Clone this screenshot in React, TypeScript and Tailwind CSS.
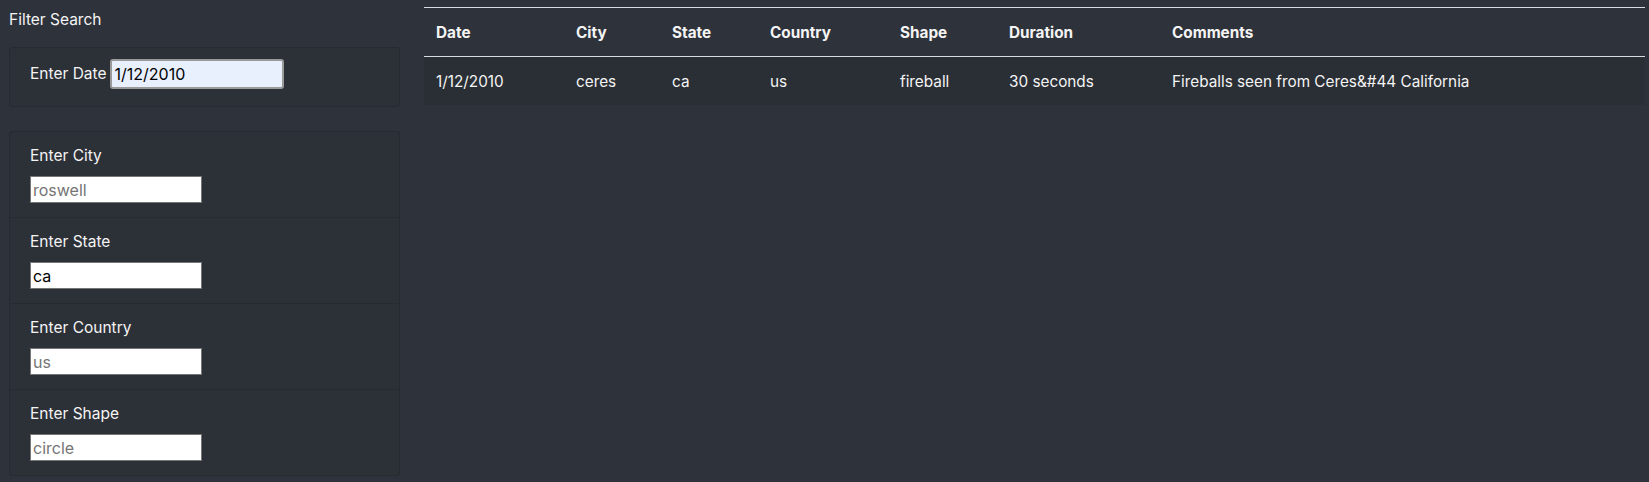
import React from 'react';

const font = { fontFamily: 'Inter, "Noto Sans", sans-serif' };

const fields = [
  { label: 'Enter City', placeholder: 'roswell', value: '' },
  { label: 'Enter State', placeholder: '', value: 'ca' },
  { label: 'Enter Country', placeholder: 'us', value: '' },
  { label: 'Enter Shape', placeholder: 'circle', value: '' },
];

const cols = [
  { name: 'Date', w: 'w-[140px]' },
  { name: 'City', w: 'w-[96px]' },
  { name: 'State', w: 'w-[98px]' },
  { name: 'Country', w: 'w-[130px]' },
  { name: 'Shape', w: 'w-[109px]' },
  { name: 'Duration', w: 'w-[163px]' },
  { name: 'Comments', w: '' },
];

const row = ['1/12/2010', 'ceres', 'ca', 'us', 'fireball', '30 seconds', 'Fireballs seen from Ceres&#44 California'];

export default function App() {
  return (
    <div className="min-h-[482px] bg-[#2e323a] text-[#f4f4f4] flex" style={font}>
      {/* Filters */}
      <div className="ml-[9px] w-[391px] shrink-0">
        <div className="pt-[8px] text-[15.5px] leading-6">Filter Search</div>
        <div className="mt-[15px] h-[60px] border border-[#272a30] rounded-[3px] bg-[#2c3037] pl-[20px] flex items-start pt-[11px]">
          <label className="text-[15.5px] leading-[30px] mr-[4px]">Enter Date</label>
          <input
            className="w-[174px] h-[30px] bg-[#e8f0fe] border-2 border-[#9a9a9a] rounded-[3px] px-[2px] text-[16px] text-black outline-none"
            defaultValue="1/12/2010"
          />
        </div>
        <ul className="mt-[24px] border border-[#272a30] rounded-[3px] bg-[#2c3037]">
          {fields.map((f, i) => (
            <li key={f.label} className={`px-[20px] pt-[12px] pb-[14px] ${i > 0 ? 'border-t border-[#272a30]' : ''}`}>
              <label className="block text-[15.5px] leading-6 mb-[8px]">{f.label}</label>
              <input
                className="block w-[172px] h-[27px] bg-white border border-[#767676] px-[2px] text-[16px] text-black placeholder:text-[#757575] outline-none"
                placeholder={f.placeholder}
                defaultValue={f.value}
              />
            </li>
          ))}
        </ul>
      </div>

      {/* Results */}
      <div className="ml-[24px] mr-[4px] flex-1 pt-[7px]">
        <table className="w-full border-collapse text-[15.3px]">
          <thead>
            <tr className="border-t border-[#d8dbe0] border-b border-b-[#d8dbe0]">
              {cols.map((c) => (
                <th key={c.name} className={`${c.w} text-left font-bold px-[12px] pt-[13px] pb-[11px] leading-6`}>
                  {c.name}
                </th>
              ))}
            </tr>
          </thead>
          <tbody>
            <tr className="bg-[#2a2e35]">
              {row.map((v, i) => (
                <td key={i} className="px-[12px] pt-[13px] pb-[11px] leading-6">
                  {v}
                </td>
              ))}
            </tr>
          </tbody>
        </table>
      </div>
    </div>
  );
}
